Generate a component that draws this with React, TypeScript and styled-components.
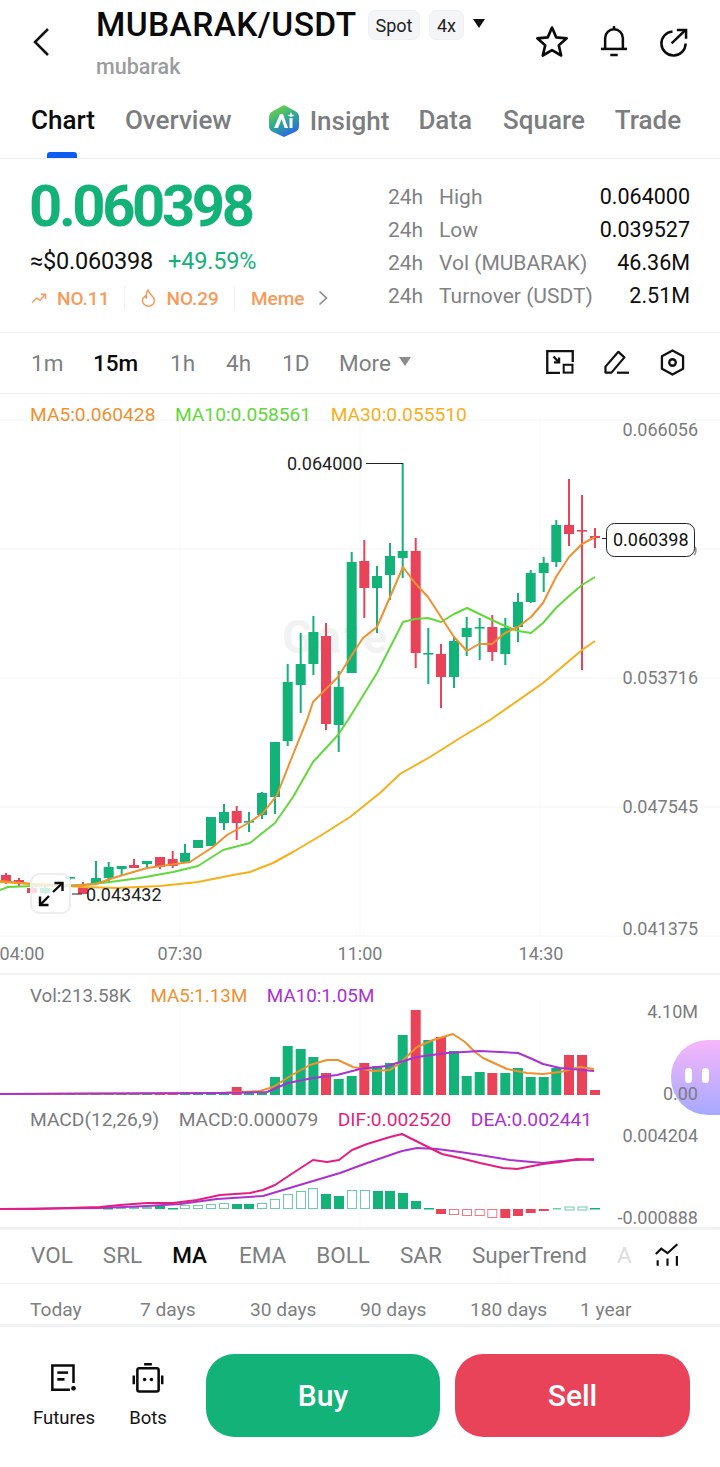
import React from 'react';
import styled, { createGlobalStyle } from 'styled-components';

const Global = createGlobalStyle`
  html, body { margin: 0; padding: 0; background: #fff; }
  body { font-family: Roboto, "Liberation Sans", sans-serif; }
  * { box-sizing: border-box; }
`;

const G = '#12b278';
const R = '#e9435a';

const Page = styled.div`
  width: 720px; height: 1467px; background: #fff; display: flex; flex-direction: column;
  overflow: hidden; position: relative; color: #111;
`;

const Header = styled.header`
  height: 90px; display: flex; align-items: flex-start; position: relative;
`;
const Back = styled.div`
  width: 96px; padding: 28px 0 0 33px; flex: none;
`;
const TitleCol = styled.div`
  width: 430px; flex: none; padding-top: 5px;
`;
const TitleRow = styled.div`display: flex; align-items: center; height: 40px;`;
const Title = styled.div`
  font-size: 33.5px; font-weight: 500; letter-spacing: 0.4px; line-height: 40px; color: #0a0a0a; width: 272px; flex: none;
`;
const Chip = styled.span<{ $w: number }>`
  width: ${p => p.$w}px; height: 30px; border-radius: 7px; background: #f4f5f6; border: 1px solid #eef0f1;
  display: flex; align-items: center; justify-content: center; font-size: 18px; color: #222; margin-right: 9px; flex: none;
`;
const Caret = styled.span<{ $c: string; $s: number }>`
  width: 0; height: 0; border-left: ${p => p.$s}px solid transparent; border-right: ${p => p.$s}px solid transparent;
  border-top: ${p => p.$s + 3}px solid ${p => p.$c}; display: inline-block;
`;
const Sub = styled.div`font-size: 21.5px; font-weight: 500; color: #9a9c9e; line-height: 26px; margin-top: 9px;`;
const HeadIcons = styled.div`
  margin-left: auto; display: flex; gap: 31px; padding: 25px 32px 0 0; align-items: flex-start;
`;

const Tabs = styled.nav`
  height: 69px; border-bottom: 1px solid #eceeef; display: flex; align-items: flex-start; gap: 30px;
  padding: 14px 0 0 31px; position: relative;
`;
const Tab = styled.div<{ $on?: boolean; $mr?: number }>`
  font-size: 26px; line-height: 32px; font-weight: 500; color: ${p => (p.$on ? '#0c0c0c' : '#7b7d7f')};
  display: flex; align-items: center; position: relative; margin-right: ${p => p.$mr || 0}px;
`;
const Indicator = styled.span`
  position: absolute; left: 47px; top: 62px; width: 30px; height: 6px; border-radius: 3px 3px 0 0; background: #0d5ef0;
`;
const AiWrap = styled.span`display: flex; margin: 0 10px 0 6px;`;

const Price = styled.section`
  height: 174px; border-bottom: 1px solid #eceeef; display: flex; position: relative;
`;
const PriceLeft = styled.div`width: 358px; padding: 15px 0 0 29px; flex: none;`;
const BigPrice = styled.div`
  font-size: 58px; font-weight: 700; line-height: 64px; color: ${G}; letter-spacing: -3.4px;
`;
const SubPrice = styled.div`
  display: flex; gap: 15px; margin: 9px 0 0 1px; font-size: 23.5px; line-height: 28px; color: #111; letter-spacing: -0.2px;
  & b { font-weight: 400; color: ${G}; }
`;
const Ranks = styled.div`
  display: flex; align-items: center; margin: 11px 0 0 2px; font-size: 19px; font-weight: 500; color: #f79b5c; height: 24px;
`;
const Rank = styled.span<{ $last?: boolean }>`
  display: flex; align-items: center; gap: 10px; padding-right: ${p => (p.$last ? 0 : 15)}px; margin-right: ${p => (p.$last ? 0 : 16)}px;
  border-right: ${p => (p.$last ? 'none' : '1px solid #f0f0f0')}; height: 24px;
  ${p => p.$last && 'gap: 14px;'}
`;
const Stats = styled.div`
  flex: 1; padding: 21px 30px 0 30px; display: flex; flex-direction: column;
`;
const Stat = styled.div`
  display: flex; align-items: center; height: 33px; font-size: 21px; color: #808284;
  & i { font-style: normal; width: 51px; flex: none; }
  & u { text-decoration: none; color: #0d0d0d; margin-left: auto; font-size: 21.5px; }
`;

const Frames = styled.div`
  height: 61px; border-bottom: 1px solid #eceeef; display: flex; align-items: center; position: relative; padding: 0 35px 0 31px;
`;
const Frame = styled.span<{ $w: number; $on?: boolean }>`
  width: ${p => p.$w}px; flex: none; font-size: 22.5px; font-weight: ${p => (p.$on ? 500 : 400)}; color: ${p => (p.$on ? '#0b0b0b' : '#7d7f81')};
  display: flex; align-items: center; gap: 8px;
`;
const FrameIcons = styled.div`margin-left: auto; display: flex; gap: 30px; align-items: center; margin-top: -2px;`;

const Pane = styled.div<{ $h: number; $rule?: boolean }>`
  height: ${p => p.$h}px; position: relative; flex: none;
  ${p => p.$rule && 'border-bottom: 2px solid #f0f1f2;'}
  & > svg { display: block; position: absolute; inset: 0; }
`;
const Legend = styled.div<{ $t: number; $size?: number }>`
  position: absolute; left: 30px; top: ${p => p.$t}px; display: flex; gap: 19.5px; font-size: ${p => p.$size || 19.2}px; line-height: 22px; white-space: nowrap;
`;
const LegendItem = styled.span<{ $c: string }>`color: ${p => p.$c};`;
const Expand = styled.div`
  position: absolute; left: 30px; top: 479px; width: 41px; height: 41px; border-radius: 9px;
  border: 2px solid #eceeef; background: rgba(255,255,255,.8); display: flex; align-items: center; justify-content: center;
`;
const Buddy = styled.div`
  position: absolute; left: 671px; top: 1040px; width: 60px; height: 75px; border-radius: 37px 0 0 37px;
  background: linear-gradient(180deg, #f6b6fb 0%, #a6a9ff 100%); display: flex; gap: 10px; justify-content: flex-start; padding: 28px 0 0 14px;
  & span { width: 7px; height: 15px; border-radius: 4px; background: #fff; display: block; }
`;
const ZeroLabel = styled.span`
  position: absolute; right: 22px; top: 1083px; font-size: 18px; line-height: 22px; color: #7a7c7e;
`;

const Indicators = styled.div`
  height: 57px; border-top: 3px solid #f0f1f2; border-bottom: 1px solid #eceeef; display: flex; align-items: center; padding: 0 0 4px 31px; position: relative; gap: 30px;
`;
const Ind = styled.span<{ $on?: boolean; $fade?: boolean }>`
  font-size: 22.5px; font-weight: ${p => (p.$on ? 500 : 400)}; color: ${p => (p.$on ? '#0b0b0b' : p.$fade ? '#dcdddd' : '#7d7f81')};
  ${p => p.$on && 'margin-right: 2px;'}
`;
const IndIcon = styled.span`position: absolute; left: 655px; top: 13px; display: flex;`;

const Ranges = styled.div`
  height: 43px; border-bottom: 3px solid #f0f1f2; display: grid; grid-template-columns: repeat(6, 110px); padding: 11px 0 0 30px; align-items: center;
`;
const RangeItem = styled.span`font-size: 19.2px; color: #7d7f81;`;

const Bottom = styled.footer`
  flex: 1; display: flex; padding: 27px 30px 0 33px; align-items: flex-start;
`;
const Action = styled.div<{ $w: number }>`
  width: ${p => p.$w}px; flex: none; display: flex; flex-direction: column; align-items: center; gap: 14px; padding-top: 9px;
  font-size: 18.5px; color: #141414;
`;
const Trade = styled.div<{ $c: string; $w: number; $ml: number }>`
  height: 83px; width: ${p => p.$w}px; margin-left: ${p => p.$ml}px; border-radius: 28px; background: ${p => p.$c};
  color: #fff; font-size: 30px; font-weight: 500; display: flex; align-items: center; justify-content: center; flex: none;
`;

const AxisText = styled.text<{ $c?: string }>`
  font-family: Roboto, "Liberation Sans", sans-serif; font-size: 18px; fill: ${p => p.$c || '#7a7c7e'};
`;

type C = [number, number, number, number, number, 'g' | 'r'];
const candles: C[] = [
  [6,875,882,873,884,'r'],[19,880,884,878,886,'r'],[32,888,893,886,894,'r'],[45,888,893,886,894,'g'],[57,884,887,882,889,'g'],
  [70,877,878.6,877,880,'g'],[83,887,894,882,894,'r'],[96,878,883,861,883,'g'],[108.7,867,878,862,882,'g'],[121.7,866,869,866,876,'g'],
  [134,865,868,859,868,'r'],[147,861,864,861,867,'g'],[160,857,867,857,869,'r'],[172.7,859,866,851,868,'r'],[185,853,862,844,862,'g'],
  [198,840,848,840,848,'g'],[211,817,846,817,846,'g'],[224,812,823,804,830,'g'],[236.7,811,823,806,840,'r'],[249,821,822.6,812,832,'g'],
  [262,793,815,792,819,'g'],[275,742,797,742,814,'g'],[287.7,682,741,664,746,'g'],[300.7,664,685,633,713,'g'],[313.4,632,664,616,675,'g'],
  [326,636,724,623,730,'r'],[338.7,687,725,671,752,'g'],[351.7,562,673,552,673,'g'],[364.3,561,588,540,618,'r'],[377,576,588,566,633,'g'],
  [390,556,575,543,600,'g'],[402.7,551,558,463,578,'g'],[415.7,551,653,538,668,'r'],[428.3,653,654.6,628,684,'g'],[441,654,677,644,708,'r'],
  [454,641,677,637,688,'g'],[466.7,628,637,617,656,'g'],[479.7,627,628.6,618,660,'g'],[492.3,627,652,615,661,'r'],[505.3,628,654,618,665,'g'],
  [518,602,627,593,642,'g'],[530.7,573,602,570,603,'g'],[543.7,563,573,557,592,'g'],[556.3,525,562,520,567,'g'],[569,525,534,479,546,'r'],
  [582,530,531.6,495,670,'r'],[595,536,538,528,548,'r'],
];
const ma5 = '0,881 32,884 70,886 96,884 113,878 147,868 190,862 213,847 227,835 250,822 263,813 277,795 292,757 307,720 313,702 338,677 355,650 363,638 377,627 390,597 403,567 415,583 428,597 441,617 454,637 467,651 479,644 492,644 505,633 518,627 531,617 543,603 556,577 569,557 582,544 595,537';
const ma10 = '0,890 8,887 33,886 83,885 110,882 140,878 173,872 198,866 223,850 250,843 275,823 293,797 313,762 338,735 348,720 377,673 403,622 415,619 428,618 441,622 454,614 467,608 492,620 505,626 518,631 531,633 543,623 556,608 569,596 582,585 595,577';
const ma30 = '0,882 33,884 83,887 117,888 160,886 198,882 233,875 250,872 273,863 293,852 320,836 350,817 380,793 400,774 430,757 460,738 490,720 543,683 582,650 595,641';

type V = [number, number, 'g' | 'r'];
const vols: V[] = [
  [6,1093,'r'],[19,1094,'g'],[32,1094,'g'],[45,1094,'g'],[57,1094,'g'],[70,1094,'g'],[83,1094,'g'],[96,1093,'g'],[108.7,1094,'g'],[121.7,1094,'g'],[134,1094,'g'],[147,1094,'g'],[160,1094,'r'],[172.7,1094,'r'],[185,1094,'g'],[198,1093,'g'],[211,1093,'g'],[224,1093,'g'],
  [236.7,1087,'r'],[249,1092,'g'],[262,1092,'g'],[275,1077,'g'],[287.7,1046,'g'],[300.7,1049,'g'],[313.4,1057,'g'],[326,1073,'r'],[338.7,1079,'g'],[351.7,1076,'g'],[364.3,1063,'r'],[377,1066,'g'],[390,1063,'g'],[402.7,1035,'g'],[415.7,1010,'r'],[428.3,1040,'g'],[441,1037,'r'],[454,1051,'g'],[466.7,1076,'g'],[479.7,1072,'g'],[492.3,1073,'r'],[505.3,1073,'g'],[518,1068,'g'],[530.7,1077,'g'],[543.7,1077,'g'],[556.3,1068,'g'],[569,1055,'r'],[582,1055,'r'],[595,1090,'r'],
];
const volMa5 = '0,1094 220,1093 260,1091 273,1087 292,1075 310,1065 327,1060 338,1060 353,1067 373,1071 390,1070 400,1063 417,1047 433,1040 453,1034 465,1042 475,1052 483,1058 507,1069 527,1073 543,1074 560,1072 580,1067 594,1069';
const volMa10 = '0,1094 220,1093 267,1092 288,1083 313,1078 337,1075 360,1069 387,1066 417,1057 447,1053 480,1051 518,1053 530,1058 543,1064 560,1068 594,1071';

type M = [number, number, boolean, 'g' | 'r'];
const macd: M[] = [
  [108,1208,true,'g'],[121,1207,false,'g'],[134,1207,false,'g'],[147,1207,false,'g'],[160,1206,true,'g'],[173,1208,true,'g'],[185,1205,false,'g'],[198,1205,false,'g'],[211,1204,false,'g'],[224,1203,false,'g'],[237,1204,true,'g'],[249,1204,true,'g'],[262,1203,false,'g'],[275,1199,false,'g'],[288,1194,false,'g'],[301,1191,false,'g'],[313,1188,false,'g'],[326,1194,true,'g'],[339,1196,true,'g'],[352,1190,false,'g'],[365,1190,false,'g'],[378,1191,true,'g'],[390,1191,true,'g'],[403,1193,true,'g'],[416,1201,true,'g'],[429,1208,true,'g'],
  [441,1214,true,'r'],[454,1215,false,'r'],[467,1216,false,'r'],[479.7,1216,false,'r'],[492.3,1218,false,'r'],[505.3,1218,true,'r'],[518,1216,true,'r'],[530.7,1213,true,'r'],[543.7,1211,true,'r'],
];
const dif = '0,1209 33,1209 67,1208 100,1207 120,1205 147,1203 173,1203 197,1200 220,1195 250,1193 263,1190 275,1185 290,1175 313,1160 327,1162 339,1160 352,1150 367,1144 390,1137 402,1134 420,1143 442,1154 460,1158 480,1163 503,1168 517,1169 543,1164 560,1162 577,1159 594,1160';
const dea = '0,1209 100,1208 147,1206 180,1204 217,1199 263,1196 283,1190 313,1181 340,1173 367,1163 402,1151 417,1148 437,1149 460,1152 480,1155 510,1160 543,1163 560,1161 594,1159';

const col = (k: string) => (k === 'g' ? G : R);
const Line = ({ pts, c, w = 2 }: { pts: string; c: string; w?: number }) => (
  <polyline points={pts} fill="none" stroke={c} strokeWidth={w} strokeLinejoin="round" />
);

const MainChart = () => (
  <svg width="720" height="581" viewBox="0 394 720 581">
    {[420, 549, 678, 807, 936].map(y => <line key={y} x1="0" x2="720" y1={y} y2={y} stroke="#f3f4f5" />)}
    {[180, 360, 540].map(x => <line key={x} x1={x} x2={x} y1="420" y2="936" stroke="#f6f7f8" />)}
    <text x="282" y="653" fontFamily="Roboto, sans-serif" fontWeight="700" fontSize="46" letterSpacing="3" fill="#f1f3f3">Gate</text>
    {candles.map(([x, t, b, wt, wb, k], i) => (
      <g key={i} fill={col(k)}>
        <rect x={x - 1} y={wt} width="2" height={wb - wt} />
        <rect x={x - 5} y={t} width="10" height={b - t} />
      </g>
    ))}
    <Line pts={ma30} c="#f6b01c" />
    <Line pts={ma10} c="#62d83c" />
    <Line pts={ma5} c="#ef9130" />
    <line x1="366" x2="403" y1="463.5" y2="463.5" stroke="#222" strokeWidth="1" />
    <AxisText x="287" y="470" $c="#222">0.064000</AxisText>
    <line x1="72" x2="82" y1="894" y2="894" stroke="#222" strokeWidth="1" />
    <AxisText x="86" y="901" $c="#222">0.043432</AxisText>
    <line x1="602" x2="606" y1="538.5" y2="538.5" stroke="#222" strokeWidth="1" />
    {[['0.066056', 436], ['0.053716', 684], ['0.047545', 813], ['0.041375', 935]].map(([t, y]) => (
      <AxisText key={t} x="698" y={y} textAnchor="end">{t}</AxisText>
    ))}
    <path d="M694 546 A3.5 5 0 0 1 694 555" fill="none" stroke="#8a8c8e" strokeWidth="1.4" />
    <rect x="606.5" y="523.5" width="88" height="33" rx="8" fill="#fff" stroke="#222" />
    <AxisText x="613" y="546" $c="#111">0.060398</AxisText>
    {[['04:00', 22], ['07:30', 180], ['11:00', 360], ['14:30', 541]].map(([t, x]) => (
      <AxisText key={t} x={x} y="960" textAnchor="middle">{t}</AxisText>
    ))}
  </svg>
);

const VolChart = () => (
  <svg width="720" height="125" viewBox="0 975 720 125">
    {[180, 360, 540].map(x => <line key={x} x1={x} x2={x} y1="1000" y2="1095" stroke="#f6f7f8" />)}
    {vols.map(([x, t, k], i) => <rect key={i} x={x - 5} y={t} width="10" height={1095 - t} fill={col(k)} />)}
    <Line pts={volMa5} c="#ef9130" />
    <Line pts={volMa10} c="#aa32d0" />
    <AxisText x="698" y="1018" textAnchor="end">4.10M</AxisText>
  </svg>
);

const MacdChart = () => (
  <svg width="720" height="127" viewBox="0 1100 720 127">
    {[180, 360, 540].map(x => <line key={x} x1={x} x2={x} y1="1130" y2="1226" stroke="#f6f7f8" />)}
    {macd.map(([x, y, filled, k], i) => {
      const base = 1209;
      const top = Math.min(y, base);
      const h = Math.abs(y - base);
      return filled
        ? <rect key={i} x={x - 5} y={top} width="10" height={Math.max(h, 1.5)} fill={col(k)} />
        : <rect key={i} x={x - 4.5} y={top + .5} width="9" height={Math.max(h - 1, 1)} fill="#fff" stroke={k === 'g' ? '#6ccba8' : '#ec7a8a'} />;
    })}
    <rect x="553" y="1208" width="8" height="1.5" fill="#6ccba8" />
    <rect x="565" y="1207" width="9" height="3" fill="#fff" stroke="#6ccba8" />
    <rect x="578" y="1207" width="9" height="3" fill="#fff" stroke="#6ccba8" />
    <rect x="590" y="1208" width="10" height="1.5" fill={G} />
    <Line pts={dea} c="#aa32d0" />
    <Line pts={dif} c="#e21f80" />
    <AxisText x="698" y="1142" textAnchor="end">0.004204</AxisText>
    <AxisText x="698" y="1224" textAnchor="end">-0.000888</AxisText>
  </svg>
);

const AiLogo = () => (
  <svg width="32" height="34" viewBox="0 0 32 34">
    <defs>
      <linearGradient id="ai" x1="0.15" y1="0.1" x2="0.6" y2="1">
        <stop offset="0" stopColor="#6ed24a" />
        <stop offset="0.5" stopColor="#2ea891" />
        <stop offset="1" stopColor="#2a68e6" />
      </linearGradient>
    </defs>
    <path d="M16 1 L27 7 Q31 9 31 13 V22 Q31 26 27 28 L16 33 L5 28 Q1 26 1 22 V13 Q1 9 5 7 Z" fill="url(#ai)" />
    <path d="M6 24 L12 10 H15 L20 24 H16.6 L13.6 15 L10 24 Z" fill="#fff" />
    <rect x="21.5" y="14" width="3" height="10" fill="#fff" />
    <path d="M23 8 L24 10.5 L26.5 11.5 L24 12.5 L23 13 L22 12.5 L19.5 11.5 L22 10.5 Z" fill="#fff" />
  </svg>
);

const Chevron = () => (
  <svg width="16" height="28" viewBox="0 0 16 28" fill="none" stroke="#111" strokeWidth="2.5">
    <path d="M15 1 L2 14 L15 27" />
  </svg>
);
const StarI = () => (
  <svg width="34" height="33" viewBox="0 0 33 32" fill="none" stroke="#0b0b0b" strokeWidth="2.6" strokeLinejoin="round">
    <path d="M16.5 2.5 L20.6 12 L30.8 12.9 L23.1 19.6 L25.4 29.6 L16.5 24.3 L7.6 29.6 L9.9 19.6 L2.2 12.9 L12.4 12 Z" />
  </svg>
);
const BellI = () => (
  <svg width="28" height="32" viewBox="0 0 30 34" fill="none" stroke="#0b0b0b" strokeWidth="2.7">
    <path d="M15 1 V5" />
    <path d="M5.5 25 V14 A9.5 9.5 0 0 1 24.5 14 V25" />
    <path d="M1 25.5 H29" />
    <path d="M11 32 H19" />
  </svg>
);
const ShareI = () => (
  <svg width="29" height="29" viewBox="0 0 30 30" fill="none" stroke="#0b0b0b" strokeWidth="2.6" style={{ marginTop: 3 }}>
    <path d="M14 3.5 A12.5 12.5 0 1 0 27.5 16" />
    <path d="M13 16 L27 2.5" />
    <path d="M18.5 2 H28 V11" />
  </svg>
);
const TrendI = () => (
  <svg width="16" height="12" viewBox="0 0 16 12" fill="none" stroke="#f79b5c" strokeWidth="1.5">
    <path d="M1 10.5 L6 6 L9 8.5 L14 2.5" />
    <path d="M10 2.2 H14.5 V7" />
  </svg>
);
const FlameI = () => (
  <svg width="15" height="18" viewBox="0 0 15 18" fill="none" stroke="#f79b5c" strokeWidth="1.5">
    <path d="M7 1 C7.5 5 13.5 7.5 13.5 11.5 A6 5.7 0 0 1 1.5 11.5 C1.5 9.5 2.5 8 4 7 C4.2 8.5 5 9 5.5 9 C5 6 5.5 3 7 1 Z" />
  </svg>
);
const SmallChevron = () => (
  <svg width="10" height="16" viewBox="0 0 10 16" fill="none" stroke="#888" strokeWidth="1.6">
    <path d="M1.5 1.5 L8.5 8 L1.5 14.5" />
  </svg>
);
const ResizeI = () => (
  <svg width="28" height="24" viewBox="0 0 30 26" fill="none" stroke="#111" strokeWidth="2.5">
    <path d="M15 24.8 H1.2 V1.2 H28.8 V13" />
    <path d="M8 7 L13.5 13" />
    <path d="M14 8 V13.5 H8.5" />
    <rect x="19" y="16" width="9.5" height="8.5" strokeWidth="2.2" />
  </svg>
);
const PenI = () => (
  <svg width="26" height="24" viewBox="0 0 28 26" fill="none" stroke="#111" strokeWidth="2.4" strokeLinejoin="round">
    <path d="M1.5 24.5 V18 L15.5 2 L22 8 L8 24.5 Z" />
    <path d="M14 24.6 H27" />
  </svg>
);
const HexI = () => (
  <svg width="25" height="27" viewBox="0 0 26 28" fill="none" stroke="#111" strokeWidth="2.4">
    <path d="M13 1.5 L24 7.5 V20.5 L13 26.5 L2 20.5 V7.5 Z" strokeLinejoin="round" />
    <circle cx="13" cy="14" r="3.4" />
  </svg>
);
const ExpandI = () => (
  <svg width="26" height="26" viewBox="0 0 26 26" fill="none" stroke="#0a0a0a" strokeWidth="2.4">
    <path d="M15 11 L24 2.5" />
    <path d="M16.5 2 H24.5 V10" />
    <path d="M11 15 L2.5 23.5" />
    <path d="M2 15.5 V24 H10.5" />
  </svg>
);
const IndI = () => (
  <svg width="25" height="24" viewBox="0 0 28 26" fill="none" stroke="#0c0c0c" strokeWidth="2.4">
    <path d="M1 12 L7 6 L14 11 L25 1" />
    <path d="M3 19 V25 M14 17 V25 M24.5 14 V25" />
  </svg>
);
const FuturesI = () => (
  <svg width="27" height="30" viewBox="0 0 30 31" fill="none" stroke="#0a0a0a" strokeWidth="2.8">
    <path d="M25 21 V1.5 H1.5 V28.5 H21" />
    <path d="M7 9.5 H19" />
    <path d="M7 17 H15" strokeWidth="3" />
    <circle cx="25" cy="27" r="2.6" fill="#0a0a0a" stroke="none" />
  </svg>
);
const BotsI = () => (
  <svg width="32" height="30" viewBox="0 0 32 31" fill="none" stroke="#0a0a0a" strokeWidth="2.6">
    <path d="M12 1.3 H20" />
    <rect x="5" y="5.5" width="22" height="24" rx="2" />
    <path d="M1.3 13 V22 M30.7 13 V22" />
    <circle cx="12.5" cy="17" r="1.8" fill="#0a0a0a" stroke="none" />
    <circle cx="19.5" cy="17" r="1.8" fill="#0a0a0a" stroke="none" />
  </svg>
);

const stats: [string, string][] = [
  ['High', '0.064000'], ['Low', '0.039527'], ['Vol (MUBARAK)', '46.36M'], ['Turnover (USDT)', '2.51M'],
];

export default function App() {
  return (
    <Page>
      <Global />
      <Header>
        <Back><Chevron /></Back>
        <TitleCol>
          <TitleRow>
            <Title>MUBARAK/USDT</Title>
            <Chip $w={52}>Spot</Chip>
            <Chip $w={35}>4x</Chip>
            <Caret $c="#111" $s={6} style={{ marginTop: -4 }} />
          </TitleRow>
          <Sub>mubarak</Sub>
        </TitleCol>
        <HeadIcons><StarI /><BellI /><ShareI /></HeadIcons>
      </Header>
      <Tabs>
        <Tab $on>Chart</Tab>
        <Tab>Overview</Tab>
        <Tab $mr={-1}><AiWrap><AiLogo /></AiWrap>Insight</Tab>
        <Tab $mr={1}>Data</Tab>
        <Tab>Square</Tab>
        <Tab>Trade</Tab>
        <Indicator />
      </Tabs>
      <Price>
        <PriceLeft>
          <BigPrice>0.060398</BigPrice>
          <SubPrice><span>≈$0.060398</span><b>+49.59%</b></SubPrice>
          <Ranks>
            <Rank><TrendI />NO.11</Rank>
            <Rank><FlameI />NO.29</Rank>
            <Rank $last>Meme <SmallChevron /></Rank>
          </Ranks>
        </PriceLeft>
        <Stats>
          {stats.map(([l, v]) => (
            <Stat key={l}><i>24h</i><span>{l}</span><u>{v}</u></Stat>
          ))}
        </Stats>
      </Price>
      <Frames>
        <Frame $w={62}>1m</Frame>
        <Frame $w={77} $on>15m</Frame>
        <Frame $w={56}>1h</Frame>
        <Frame $w={56}>4h</Frame>
        <Frame $w={57}>1D</Frame>
        <Frame $w={90}>More <Caret $c="#8a8c8e" $s={6} style={{ marginTop: -4 }} /></Frame>
        <FrameIcons><ResizeI /><PenI /><HexI /></FrameIcons>
      </Frames>
      <Pane $h={581} $rule>
        <MainChart />
        <Legend $t={10}>
          <LegendItem $c="#ef9130">MA5:0.060428</LegendItem>
          <LegendItem $c="#62d83c">MA10:0.058561</LegendItem>
          <LegendItem $c="#f6b01c">MA30:0.055510</LegendItem>
        </Legend>
        <Expand><ExpandI /></Expand>
      </Pane>
      <Pane $h={125}>
        <VolChart />
        <Legend $t={10} $size={18.8}>
          <LegendItem $c="#7a7c7e">Vol:213.58K</LegendItem>
          <LegendItem $c="#ef9130">MA5:1.13M</LegendItem>
          <LegendItem $c="#aa32d0">MA10:1.05M</LegendItem>
        </Legend>
      </Pane>
      <Pane $h={127}>
        <MacdChart />
        <Legend $t={9}>
          <LegendItem $c="#7a7c7e">MACD(12,26,9)</LegendItem>
          <LegendItem $c="#7a7c7e">MACD:0.000079</LegendItem>
          <LegendItem $c="#e21f80">DIF:0.002520</LegendItem>
          <LegendItem $c="#aa32d0">DEA:0.002441</LegendItem>
        </Legend>
      </Pane>
      <Buddy><span /><span /></Buddy>
      <ZeroLabel>0.00</ZeroLabel>
      <Indicators>
        <Ind>VOL</Ind><Ind>SRL</Ind><Ind $on>MA</Ind><Ind>EMA</Ind><Ind>BOLL</Ind><Ind>SAR</Ind><Ind>SuperTrend</Ind><Ind $fade>A</Ind>
        <IndIcon><IndI /></IndIcon>
      </Indicators>
      <Ranges>
        {['Today', '7 days', '30 days', '90 days', '180 days', '1 year'].map(t => <RangeItem key={t}>{t}</RangeItem>)}
      </Ranges>
      <Bottom>
        <Action $w={62}><FuturesI />Futures</Action>
        <Action $w={106}><BotsI />Bots</Action>
        <Trade $c={G} $w={234} $ml={5}>Buy</Trade>
        <Trade $c={R} $w={235} $ml={15}>Sell</Trade>
      </Bottom>
    </Page>
  );
}
